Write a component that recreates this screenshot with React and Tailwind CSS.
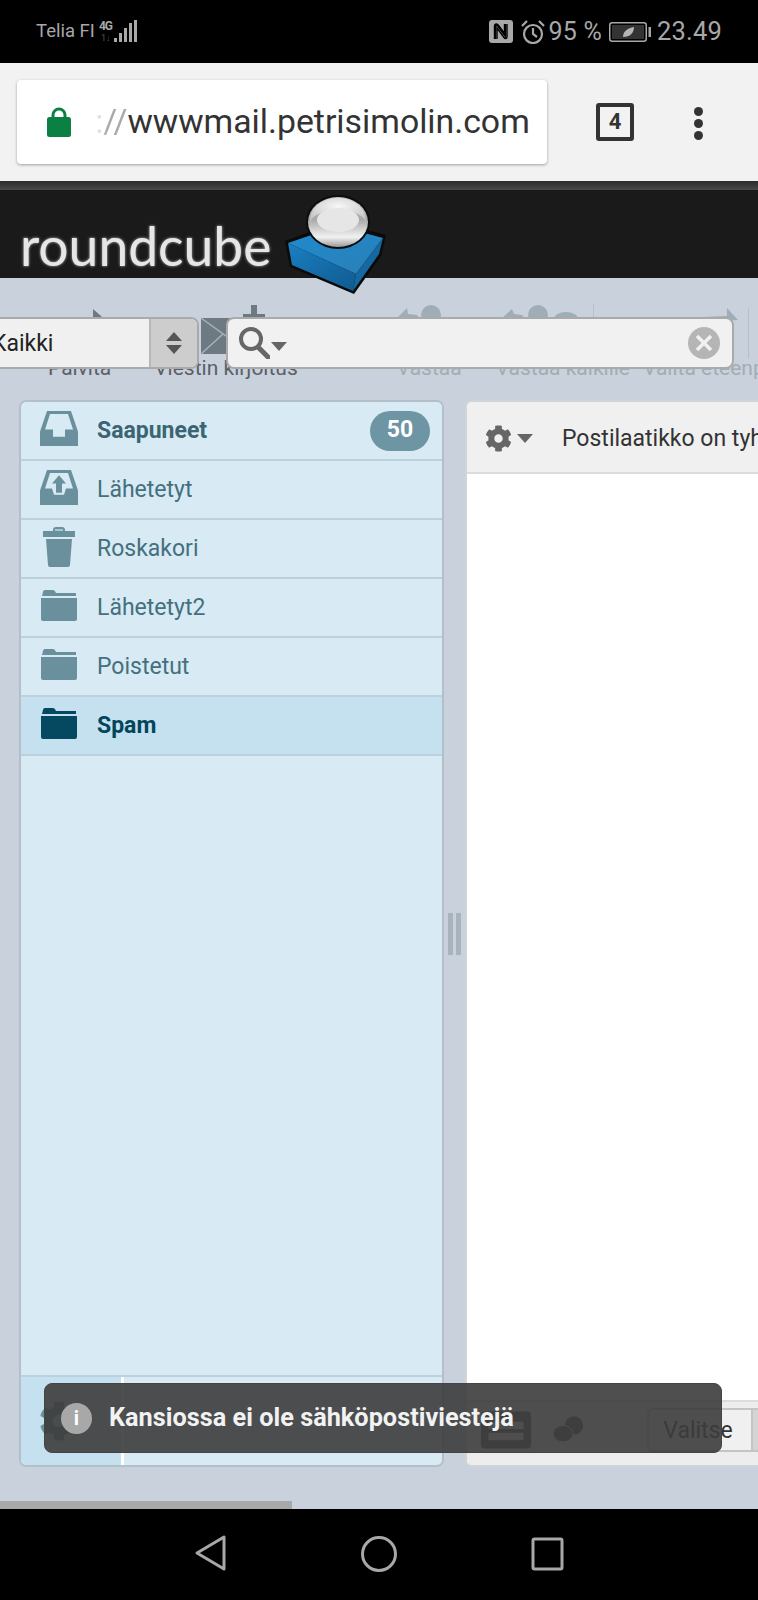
import React from "react";
import { FaCog } from "react-icons/fa";

const Caret = ({ className = "", w = 16, h = 9, color = "#666" }) => (
  <svg width={w} height={h} viewBox="0 0 16 9" className={className}><polygon points="0,0 16,0 8,9" fill={color} /></svg>
);

const InboxIcon = ({ c = "#6b909d" }) => (
  <svg width="38" height="35" viewBox="0 0 38 34" preserveAspectRatio="none">
    <path d="M7 0H31L38 20V34H0V20Z" fill={c} />
    <path d="M10 3H28L33 18H25V25H13V18H5Z" fill="#d8eaf3" />
  </svg>
);
const SentIcon = ({ c = "#6b909d" }) => (
  <svg width="38" height="35" viewBox="0 0 38 34" preserveAspectRatio="none">
    <path d="M7 0H31L38 20V34H0V20Z" fill={c} />
    <path d="M10 3H28L33 18H26L24 24H14L12 18H5Z" fill="#d8eaf3" />
    <polygon points="19,5 26,13 22,13 22,22 16,22 16,13 12,13" fill={c} />
  </svg>
);
const TrashIcon = ({ c = "#6b909d" }) => (
  <svg width="32" height="40" viewBox="0 0 32 40">
    <path d="M10 3Q10 0 13 0H19Q22 0 22 3V4H32V10H0V4H10Z" fill={c} />
    <rect x="12" y="2" width="8" height="2" fill="#a9c6d2" />
    <path d="M3 12H29L27 38Q27 40 25 40H7Q5 40 5 38Z" fill={c} />
  </svg>
);
const FolderIcon = ({ c = "#6b909d" }) => (
  <svg width="38" height="31" viewBox="0 0 38 31">
    <path d="M3 2Q3 0 5 0H13Q15 0 16 3H36V6H2Z" fill={c} />
    <path d="M1 8H37V29Q37 31 35 31H3Q1 31 1 29Z" fill={c} />
  </svg>
);

const folders = [
  { name: "Saapuneet", Icon: InboxIcon, bold: true, badge: "50" },
  { name: "Lähetetyt", Icon: SentIcon },
  { name: "Roskakori", Icon: TrashIcon },
  { name: "Lähetetyt2", Icon: FolderIcon },
  { name: "Poistetut", Icon: FolderIcon },
  { name: "Spam", Icon: FolderIcon, active: true },
];

function StatusBar() {
  return (
    <div className="h-[63px] bg-black flex items-center pl-[36px] pr-[36px] text-[#a8a8a8] shrink-0">
      <span className="text-[18.5px] leading-none">Telia FI</span>
      <svg width="42" height="26" viewBox="0 0 42 26" className="ml-[4px]">
        <text x="0" y="11" fontSize="12" fontWeight="700" fill="#a8a8a8" fontFamily="Roboto, sans-serif" textLength="14">4G</text>
        <text x="2" y="22" fontSize="9" fill="#555" fontFamily="Roboto, sans-serif">1↓</text>
        <rect x="15" y="19" width="3" height="4" fill="#a8a8a8" />
        <rect x="20" y="14" width="3" height="9" fill="#a8a8a8" />
        <rect x="25" y="9" width="3" height="14" fill="#a8a8a8" />
        <rect x="30" y="4" width="3" height="19" fill="#a8a8a8" />
        <rect x="35" y="1" width="3" height="22" fill="#a8a8a8" />
      </svg>
      <div className="ml-auto flex items-center">
        <svg width="24" height="23" viewBox="0 0 24 23">
          <rect width="24" height="23" rx="3" fill="#a8a8a8" />
          <path d="M6 19V6C6 4 8 4 9 5.5L16 15V4" fill="none" stroke="#000" strokeWidth="2.4" />
          <path d="M18 4V17C18 19 16 19 15 17.5L8 8V19" fill="none" stroke="#000" strokeWidth="1.4" />
        </svg>
        <svg width="24" height="24" viewBox="0 0 24 24" className="ml-[8px]" fill="none" stroke="#a8a8a8" strokeWidth="2.2">
          <circle cx="12" cy="14" r="9" />
          <path d="M12 8V14L16 17" />
          <path d="M1 6L6 1M23 6L18 1" />
        </svg>
        <span className="text-[25px] leading-none ml-[4px] tracking-[0.2px]">95 %</span>
        <svg width="42" height="20" viewBox="0 0 42 20" className="ml-[7px]">
          <rect x="0.75" y="0.75" width="36.5" height="18.5" rx="2.5" fill="none" stroke="#a8a8a8" strokeWidth="1.5" />
          <rect x="3" y="3" width="32" height="14" fill="#333" />
          <path d="M14 15C14 9 19 6 25 5C25 11 21 15 14 15Z" fill="#b5b5b5" />
          <rect x="39.5" y="5" width="2.5" height="10" fill="#a8a8a8" />
        </svg>
        <span className="text-[25.5px] leading-none ml-[6px] tracking-[0.2px]">23.49</span>
      </div>
    </div>
  );
}

function BrowserBar() {
  return (
    <div className="h-[118px] bg-[#f2f2f2] flex items-start shrink-0 pt-[17px] pl-[17px]">
      <div className="w-[530px] h-[84px] bg-white rounded-[4px] shadow-[0_1px_3px_rgba(0,0,0,0.35)] flex items-center pl-[30px] overflow-hidden">
        <svg width="24" height="30" viewBox="0 0 24 30" className="shrink-0">
          <path d="M6 12V8A6 6 0 0 1 18 8V12" fill="none" stroke="#0b8043" strokeWidth="3" />
          <rect y="10" width="24" height="20" rx="2.5" fill="#0b8043" />
        </svg>
        <span className="ml-[24px] text-[33.8px] leading-none whitespace-nowrap text-[#333]">
          <span className="text-[#aaa] [mask-image:linear-gradient(90deg,transparent,black_12px)] inline-block">://</span>wwwmail.petrisimolin.com
        </span>
      </div>
      <div className="ml-[49px] mt-[23px] w-[38px] h-[38px] border-[4px] border-[#333] rounded-[3px] flex items-center justify-center text-[#333] font-bold text-[22px] leading-none">4</div>
      <div className="ml-[60px] mt-[27px] flex flex-col gap-[3px]">
        <div className="w-[9px] h-[9px] rounded-full bg-[#333]" />
        <div className="w-[9px] h-[9px] rounded-full bg-[#333]" />
        <div className="w-[9px] h-[9px] rounded-full bg-[#333]" />
      </div>
    </div>
  );
}

function Logo() {
  return (
    <svg width="110" height="105" viewBox="280 190 110 105" className="absolute left-[280px] top-[190px]">
      <defs>
        <linearGradient id="sph" x1="0" y1="0" x2="0" y2="1">
          <stop offset="0" stopColor="#c8c8c8" />
          <stop offset="0.45" stopColor="#a8a8a8" />
          <stop offset="0.8" stopColor="#f2f2f2" />
          <stop offset="1" stopColor="#9a9a9a" />
        </linearGradient>
        <radialGradient id="cap" cx="0.5" cy="0.35" r="0.7">
          <stop offset="0" stopColor="#f7f7f7" />
          <stop offset="1" stopColor="#c2c2c2" />
        </radialGradient>
        <linearGradient id="topf" x1="0" y1="0" x2="1" y2="1">
          <stop offset="0" stopColor="#1f8bd0" />
          <stop offset="1" stopColor="#2a7fb5" />
        </linearGradient>
        <linearGradient id="ff" x1="0" y1="0" x2="1" y2="1">
          <stop offset="0" stopColor="#1a7fc2" />
          <stop offset="1" stopColor="#105a8f" />
        </linearGradient>
      </defs>
      <polygon points="285,241 337,222 386,235 381,256 354,294 290,267" fill="#0a0a0a" />
      <polygon points="288,243 338,226 383,238 356,274" fill="url(#topf)" />
      <polygon points="288,243 356,274 353,291 292,265" fill="url(#ff)" />
      <polygon points="356,274 383,238 379,254 353,291" fill="#1569a2" />
      <ellipse cx="338" cy="222" rx="32" ry="27" fill="#0c0c0c" />
      <ellipse cx="338" cy="222" rx="30" ry="25" fill="url(#sph)" />
      <path d="M310 222C310 190 366 190 366 222C360 206 316 206 310 222Z" fill="url(#cap)" />
      <ellipse cx="338" cy="220" rx="21" ry="12" fill="#e6e6e6" />
    </svg>
  );
}

function Toolbar() {
  return (
    <div className="h-[122px] flex pl-[48px] overflow-hidden shrink-0 relative">
      <div className="flex flex-col items-center">
        <svg width="62" height="60" viewBox="0 0 62 60" className="mt-[24px]">
          <polygon points="44,7 44,16 32,16 32,20 58,20 52,14" fill="#6e7a82" />
        </svg>
        <span className="mt-[-8px] text-[21px] leading-[28px] text-[#5a6068] whitespace-nowrap">Päivitä</span>
      </div>
      <div className="flex flex-col items-center ml-[43px]">
        <svg width="142" height="60" viewBox="0 0 142 60" className="mt-[24px]">
          <rect x="46" y="16" width="56" height="36" fill="#6e7a82" />
          <path d="M46 16L74 36L102 16M46 52L68 32M102 52L80 32" fill="none" stroke="#a8b2ba" strokeWidth="1.5" />
          <rect x="96" y="3" width="6" height="14" fill="#6e7a82" />
          <rect x="88" y="12" width="22" height="5" fill="#6e7a82" />
        </svg>
        <span className="mt-[-8px] text-[21px] leading-[28px] text-[#5a6068] whitespace-nowrap">Viestin kirjoitus</span>
      </div>
      <div className="flex flex-col items-center ml-[99px]">
        <svg width="64" height="60" viewBox="0 0 64 60" className="mt-[24px]">
          <polygon points="-2,18 10,6 11,12 20,13 24,18" fill="#9fadb8" />
          <circle cx="34" cy="13" r="10" fill="#9fadb8" />
        </svg>
        <span className="mt-[-8px] text-[21px] leading-[28px] text-[#a2acb5] whitespace-nowrap">Vastaa</span>
      </div>
      <div className="flex flex-col items-center ml-[34px]">
        <svg width="134" height="60" viewBox="0 0 134 60" className="mt-[24px]">
          <polygon points="4,18 16,7 18,12 26,13 30,18" fill="#9fadb8" />
          <circle cx="42" cy="13" r="10" fill="#9fadb8" />
          <ellipse cx="70" cy="17" rx="12" ry="7" fill="#9fadb8" />
          <rect x="97" y="2" width="1" height="18" fill="#b5c0ca" />
        </svg>
        <span className="mt-[-8px] text-[21px] leading-[28px] text-[#a2acb5] whitespace-nowrap">Vastaa kaikille</span>
      </div>
      <div className="flex flex-col items-start ml-[13px] w-[160px] shrink-0">
        <svg width="110" height="60" viewBox="0 0 110 60" className="mt-[24px]">
          <polygon points="60,15 84,14 84,6 95,18 60,20" fill="#9fadb8" />
          <rect x="105" y="6" width="1" height="50" fill="#b5c0ca" />
        </svg>
        <span className="mt-[-8px] text-[21px] leading-[28px] text-[#a2acb5] whitespace-nowrap">Välitä eteenpäin</span>
      </div>
    </div>
  );
}

function FolderPanel() {
  return (
    <div className="w-[425px] shrink-0 bg-[#d8eaf3] border-2 border-[#b3c0cb] rounded-[7px] flex flex-col overflow-hidden">
      {folders.map(({ name, Icon, bold, badge, active }) => (
        <div key={name} className={`h-[59px] shrink-0 border-b-2 border-[#bcd1dc] flex items-center pl-[18px] pr-[12px] ${active ? "bg-[#c5e1ef]" : ""}`}>
          <div className="w-[40px] flex justify-center -mt-[4px]"><Icon c={active ? "#04495f" : "#6b909d"} /></div>
          <span className={`ml-[18px] text-[23px] leading-none ${active ? "font-bold text-[#03465b]" : bold ? "font-bold text-[#3a6573]" : "text-[#44707f]"}`}>{name}</span>
          {badge && <span className="ml-auto w-[60px] h-[40px] rounded-full bg-[#6d95a3] text-white font-bold text-[23px] flex items-center justify-center">{badge}</span>}
        </div>
      ))}
      <div className="flex-1" />
      <div className="h-[90px] shrink-0 border-t-2 border-[#bcd1dc] flex">
        <div className="w-[103px] h-full bg-[#c5e1ef] border-r-[3px] border-white flex items-center pl-[18px]">
          <FaCog size={40} color="#6b909d" />
        </div>
      </div>
    </div>
  );
}

function MailPanel() {
  return (
    <div className="w-[340px] shrink-0 bg-white border-2 border-[#d0d5da] rounded-l-[7px] flex flex-col overflow-hidden">
      <div className="h-[72px] bg-[#f0f0f0] border-b-2 border-[#dcdcdc] flex items-center pl-[18px] pt-[2px] shrink-0">
        <FaCog size={27} color="#666" />
        <Caret className="ml-[5px]" />
        <span className="ml-[29px] text-[23px] leading-none text-[#333] whitespace-nowrap">Postilaatikko on tyhjä</span>
      </div>
      <div className="flex-1" />
      <div className="h-[65px] bg-[#ededed] border-t-2 border-[#dcdcdc] shrink-0 flex items-start pt-[6px] pl-[14px]">
        <svg width="50" height="38" viewBox="0 0 54 40" className="mt-[3px]">
          <rect width="54" height="40" rx="4" fill="#555" />
          <rect x="8" y="11" width="38" height="8" fill="#ededed" />
          <rect x="8" y="23" width="38" height="8" fill="#ededed" />
        </svg>
        <svg width="31" height="28" viewBox="0 0 34 30" className="ml-[22px] mt-[8px]">
          <circle cx="23" cy="10" r="10" fill="#555" />
          <ellipse cx="11" cy="19" rx="11" ry="9" fill="#555" stroke="#ededed" strokeWidth="1" />
        </svg>
        <div className="ml-[63px] w-[106px] h-[44px] shrink-0 bg-[#f0f0f0] border-2 border-[#c4c4c4] flex items-center justify-center pr-[4px] text-[23px] leading-none text-[#333] rounded-l-[6px]">Valitse</div>
        <div className="w-[20px] h-[44px] shrink-0 bg-[#d4d4d4] border-y-2 border-[#c4c4c4]" />
      </div>
    </div>
  );
}

function Overlays() {
  return (
    <>
      <div className="absolute left-[-6px] top-[317px] w-[205px] h-[52px] bg-[#f0f0f0] border-2 border-[#aaa] rounded-r-[8px] flex overflow-hidden">
        <div className="w-[153px] flex items-center text-[23px] leading-none text-[#222] -indent-[4px]">Kaikki</div>
        <div className="flex-1 bg-[#cdcdcd] border-l-2 border-[#b8b8b8] flex flex-col items-center justify-center gap-[4px]">
          <svg width="16" height="9" viewBox="0 0 16 9"><polygon points="0,9 16,9 8,0" fill="#555" /></svg>
          <Caret color="#555" />
        </div>
      </div>
      <div className="absolute left-[226px] top-[317px] w-[508px] h-[52px] bg-[#f1f1f1] border-2 border-[#aaa] rounded-[8px] flex items-center pl-[10px] pr-[12px]">
        <svg width="32" height="32" viewBox="0 0 32 32" fill="none" stroke="#666" strokeWidth="4">
          <circle cx="13" cy="12" r="10" />
          <path d="M20 20L30 30" strokeLinecap="round" strokeWidth="5" />
        </svg>
        <Caret className="ml-[1px] mt-[6px]" />
        <div className="ml-auto w-[32px] h-[32px] rounded-full bg-[#b5b5b5] flex items-center justify-center">
          <svg width="18" height="18" viewBox="0 0 18 18"><path d="M2 2L16 16M16 2L2 16" stroke="#f1f1f1" strokeWidth="3.5" /></svg>
        </div>
      </div>
      <div className="absolute left-[44px] top-[1383px] w-[678px] h-[70px] bg-[rgba(60,60,60,0.9)] border border-[#444] rounded-[8px] flex items-center pl-[16px]">
        <div className="w-[31px] h-[31px] rounded-full bg-[#a8a8a8] flex items-center justify-center text-white font-bold text-[20px] leading-none">i</div>
        <span className="ml-[17px] font-bold text-[25.3px] leading-none text-[#f2f2f2] whitespace-nowrap">Kansiossa ei ole sähköpostiviestejä</span>
      </div>
    </>
  );
}

export default function App() {
  return (
    <div className="relative w-[758px] h-[1600px] overflow-hidden flex flex-col bg-[#c9d2dc] font-[Roboto,sans-serif]">
      <StatusBar />
      <BrowserBar />
      <div className="h-[9px] shrink-0 bg-gradient-to-b from-[#2a2a2a] to-[#4a4a4a]" />
      <div className="h-[88px] shrink-0 bg-[#1a1a1a] flex items-end pl-[20px] pb-[5px]">
        <span className="font-[Lato,sans-serif] font-normal text-[53.4px] leading-[56px] text-[#e6e6e6] [text-shadow:0_0_3px_#bbb]">roundcube</span>
      </div>
      <Toolbar />
      <div className="flex pl-[19px] h-[1067px] shrink-0">
        <FolderPanel />
        <div className="w-[21px] shrink-0 flex items-center justify-center gap-[3px]">
          <div className="w-[5px] h-[42px] bg-[#a9b3bd]" />
          <div className="w-[5px] h-[42px] bg-[#a9b3bd]" />
        </div>
        <MailPanel />
      </div>
      <div className="mt-[34px] w-[292px] h-[8px] bg-[#a9a9a9] shrink-0" />
      <div className="flex-1 bg-black flex items-center">
        <svg width="758" height="91" viewBox="0 0 758 91" fill="none" stroke="#a8a8a8" strokeWidth="3">
          <path d="M224 28V60L197 44Z" strokeLinejoin="round" />
          <ellipse cx="379" cy="45" rx="16.5" ry="16.5" />
          <rect x="533" y="30" width="29" height="30" rx="1.5" />
        </svg>
      </div>
      <Logo />
      <Overlays />
    </div>
  );
}
